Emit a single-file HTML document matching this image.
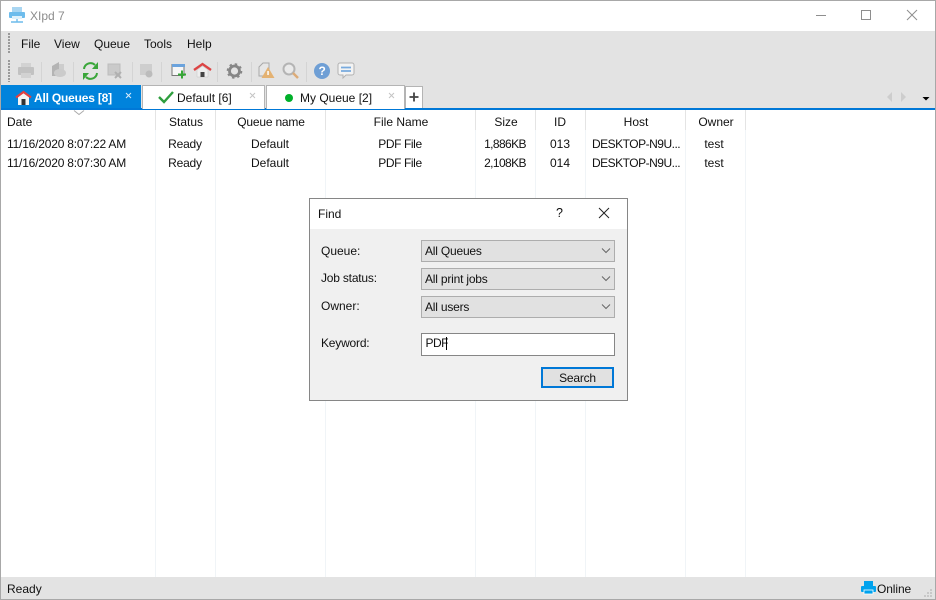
<!DOCTYPE html>
<html><head><meta charset="utf-8"><style>
html,body{margin:0;padding:0;background:#fff}
#w{position:relative;width:936px;height:600px;overflow:hidden;background:#fff;font:12px "Liberation Sans",sans-serif;color:#111}
#w div,#w span,#w svg{position:absolute}
.t{white-space:nowrap;line-height:14px}
.c{text-align:center}
.d{letter-spacing:-.2px}
.n{letter-spacing:-.5px}
.l{width:1px;top:110px;height:467px;background:#f0f4f7}
.h{width:1px;top:110px;height:20px;background:#e4e4e4}
.b{top:240px;left:421px;width:192px;height:20px;border:1px solid #adadad;background:#e1e1e1}
.sep{width:1px;height:20px;top:62px;background:#d4d4d4}
</style></head><body><div id="w">
<div style="left:0;top:0;width:936px;height:1px;background:#a8a8a8"></div>
<div style="left:0;top:31px;width:936px;height:54px;background:#e3e3e3"></div>
<div style="left:0;top:85px;width:936px;height:23px;background:#e3e3e3"></div>
<div style="left:0;top:108px;width:936px;height:2px;background:#0078d7"></div>
<div style="left:0;top:577px;width:936px;height:22px;background:#e3e3e3"></div>
<div style="left:0;top:0;width:1px;height:600px;background:#a8a8a8"></div>
<div style="left:935px;top:0;width:1px;height:600px;background:#a8a8a8"></div>
<div style="left:0;top:599px;width:936px;height:1px;background:#a8a8a8"></div>

<!-- title -->
<svg style="left:8px;top:6px;filter:blur(.3px)" width="18" height="18" viewBox="0 0 18 18"><rect x="4" y="1" width="10" height="6" fill="#a9d6f2"/><rect x="1" y="6" width="16" height="6" rx="1" fill="#6dbcec"/><rect x="4" y="10" width="10" height="3" fill="#dff1fb"/><path d="M9 13v3M3 16h12" stroke="#6dbcec" stroke-width="1.400"/></svg>
<span class="t" style="left:30px;top:9px;color:#8c8c8c;font-size:12px">XIpd 7</span>
<svg style="left:810px;top:5px" width="120" height="20" viewBox="0 0 120 20" fill="none" stroke="#8e8e8e" stroke-width="1"><path d="M6 10.500h10"/><rect x="51.500" y="5.500" width="9" height="9"/><path d="M97 5l10 10M107 5l-10 10"/></svg>

<!-- grips -->
<div style="left:8px;top:33px;width:2px;height:20px;background:repeating-linear-gradient(#9a9a9a 0 2px,transparent 2px 3px)"></div>
<div style="left:8px;top:60px;width:2px;height:22px;background:repeating-linear-gradient(#9a9a9a 0 2px,transparent 2px 3px)"></div>

<!-- menu -->
<span class="t" style="left:21px;top:37px">File</span>
<span class="t" style="left:54px;top:37px">View</span>
<span class="t" style="left:94px;top:37px">Queue</span>
<span class="t" style="left:144px;top:37px">Tools</span>
<span class="t" style="left:187px;top:37px">Help</span>

<!-- toolbar -->
<svg style="left:0;top:55px;filter:blur(.35px)" width="370" height="30" viewBox="0 0 370 30">
<rect x="21" y="8" width="10" height="5" fill="#d2d2d2"/><rect x="18" y="12" width="16" height="8" rx="1" fill="#c2c2c2"/><rect x="21" y="18" width="10" height="5" fill="#d2d2d2"/>
<path d="M52 11l7-4v14h-7z" fill="#b4b4b4"/><path d="M59 9h5v6h-5z" fill="#cdcdcd"/><ellipse cx="60" cy="18" rx="6" ry="4" fill="#cbcbcb"/>
<g fill="none" stroke="#3aa63a" stroke-width="2"><path d="M84 14a6.500 6.500 0 0 1 11-4"/><path d="M97 18a6.500 6.500 0 0 1-11 4"/></g><path d="M98 7v7h-6zM83 25v-7h6z" fill="#3aa63a"/>
<rect x="108" y="9" width="12" height="11" fill="#cacaca" stroke="#bcbcbc"/><path d="M115 17l6 6M121 17l-6 6" stroke="#b0b0b0" stroke-width="2"/>
<rect x="140" y="9" width="12" height="11" fill="#cecece"/><circle cx="149" cy="19" r="3.500" fill="#bcbcbc"/>
<rect x="172" y="9.500" width="12" height="11" fill="#f6f6f6" stroke="#777"/><rect x="172" y="9" width="13" height="3" fill="#6ba3dd"/><path d="M178 19.500h8M182 15.500v8" stroke="#35a835" stroke-width="2"/>
<path d="M194 15l8.500-6 8.500 6" fill="none" stroke="#dc4444" stroke-width="2.300"/><path d="M197 15l5.500-4 5.500 4v7h-11z" fill="#eee" stroke="#c4c4c4" stroke-width=".5"/><rect x="200.500" y="17" width="4" height="5" fill="#444"/>
<circle cx="234.500" cy="16" r="5" fill="none" stroke="#868686" stroke-width="2.800"/><circle cx="234.500" cy="16" r="7" fill="none" stroke="#868686" stroke-width="1.600" stroke-dasharray="2.500 3"/>
<path d="M259 21v-9l4-4h6v13z" fill="#e6e6e6" stroke="#a8a8a8"/><path d="M268 12l6.500 11h-13z" fill="#e4b272"/><rect x="267.300" y="16" width="1.500" height="4" fill="#fff"/>
<circle cx="289" cy="14" r="5.500" fill="#eaeaea" stroke="#b4b4b4" stroke-width="2"/><path d="M293 18l5 5" stroke="#dcab78" stroke-width="2.500"/>
<circle cx="322" cy="16" r="8" fill="#6f9fd5"/>
<path d="M340 8h12a2 2 0 0 1 2 2v8a2 2 0 0 1-2 2h-6l-3 3v-3h-3a2 2 0 0 1-2-2v-8a2 2 0 0 1 2-2z" fill="#f3f3f3" stroke="#b2b2b2"/><path d="M341 12.500h10M341 16h10" stroke="#78aade" stroke-width="1.800"/>
</svg>
<span class="t" style="left:318.500px;top:64px;color:#fff;font-weight:bold;font-size:12px">?</span>
<div class="sep" style="left:41px"></div><div class="sep" style="left:73px"></div><div class="sep" style="left:132px"></div><div class="sep" style="left:161px"></div><div class="sep" style="left:217px"></div><div class="sep" style="left:251px"></div><div class="sep" style="left:306px"></div>

<!-- tabs -->
<div style="left:1px;top:85px;width:140px;height:23px;background:#0083dc"></div>
<svg style="left:15px;top:90px" width="17" height="15" viewBox="0 0 17 15"><path d="M3 7l5.500-5L14 7v8H3z" fill="#f4f4f4"/><path d="M1 7.500l7.500-5.500L16 7.500" fill="none" stroke="#e04040" stroke-width="2.200"/><rect x="6.500" y="9" width="4" height="6" fill="#333"/></svg>
<span class="t" style="left:34px;top:91px;color:#fff;font-weight:bold;letter-spacing:-.2px">All Queues [8]</span>
<svg style="left:125px;top:92px" width="8" height="8"><path d="M1 1l5 5M6 1l-5 5" stroke="#d8ecfa" fill="none"/></svg>

<div style="left:142px;top:85px;width:121px;height:23px;background:#fff;border:1px solid #b4b4b4;border-bottom:0"></div>
<svg style="left:157px;top:90px" width="18" height="14" viewBox="0 0 18 14"><path d="M2 7l5 5L16 2" fill="none" stroke="#2e9e3e" stroke-width="2.400"/></svg>
<span class="t" style="left:177px;top:91px">Default [6]</span>
<svg style="left:249px;top:92px" width="8" height="8"><path d="M1 1l5 5M6 1l-5 5" stroke="#c4c4c4" fill="none"/></svg>

<div style="left:266px;top:85px;width:137px;height:23px;background:#fff;border:1px solid #b4b4b4;border-bottom:0"></div>
<div style="left:285px;top:94px;width:8px;height:8px;border-radius:50%;background:#00b02a"></div>
<span class="t" style="left:300px;top:91px">My Queue [2]</span>
<svg style="left:388px;top:92px" width="8" height="8"><path d="M1 1l5 5M6 1l-5 5" stroke="#c4c4c4" fill="none"/></svg>

<div style="left:405px;top:86px;width:16px;height:21px;background:#fff;border:1px solid #b4b4b4;border-bottom:0"></div>
<svg style="left:409px;top:92px" width="10" height="10"><path d="M5 0.500v9M0.500 5h9" stroke="#444" stroke-width="1.800"/></svg>

<svg style="left:884px;top:90px" width="50" height="14"><path d="M8 2L3 7l5 5z" fill="#cdcdcd"/><path d="M17 2l5 5-5 5z" fill="#cdcdcd"/><path d="M38.500 7h7l-3.500 3.500z" fill="#000"/></svg>

<!-- list -->
<div class="l" style="left:155px"></div><div class="l" style="left:215px"></div><div class="l" style="left:325px"></div><div class="l" style="left:475px"></div><div class="l" style="left:535px"></div><div class="l" style="left:585px"></div><div class="l" style="left:685px"></div><div class="l" style="left:745px"></div>
<div class="h" style="left:155px"></div><div class="h" style="left:215px"></div><div class="h" style="left:325px"></div><div class="h" style="left:475px"></div><div class="h" style="left:535px"></div><div class="h" style="left:585px"></div><div class="h" style="left:685px"></div><div class="h" style="left:745px"></div>
<svg style="left:73px;top:110px" width="12" height="6"><path d="M1 0.500l5 4 5-4" fill="none" stroke="#aaa"/></svg>

<span class="t" style="left:7px;top:115px">Date</span>
<span class="t c" style="left:156px;width:60px;top:115px">Status</span>
<span class="t c d" style="left:216px;width:110px;top:115px">Queue name</span>
<span class="t c" style="left:326px;width:150px;top:115px">File Name</span>
<span class="t c" style="left:476px;width:60px;top:115px">Size</span>
<span class="t c" style="left:535px;width:50px;top:115px">ID</span>
<span class="t c" style="left:586px;width:100px;top:115px">Host</span>
<span class="t c" style="left:686px;width:60px;top:115px">Owner</span>

<span class="t d" style="left:7px;top:137px">11/16/2020 8:07:22 AM</span>
<span class="t c d" style="left:155px;width:60px;top:137px">Ready</span>
<span class="t c" style="left:215px;width:110px;top:137px">Default</span>
<span class="t c" style="left:325px;width:150px;top:137px;letter-spacing:-.4px">PDF File</span>
<span class="t c" style="left:475px;width:60px;top:137px;letter-spacing:-.6px">1,886KB</span>
<span class="t c" style="left:535px;width:50px;top:137px">013</span>
<span class="t n" style="left:592px;top:137px">DESKTOP-N9U...</span>
<span class="t c" style="left:684px;width:60px;top:137px">test</span>

<span class="t d" style="left:7px;top:156px">11/16/2020 8:07:30 AM</span>
<span class="t c d" style="left:155px;width:60px;top:156px">Ready</span>
<span class="t c" style="left:215px;width:110px;top:156px">Default</span>
<span class="t c" style="left:325px;width:150px;top:156px;letter-spacing:-.4px">PDF File</span>
<span class="t c" style="left:475px;width:60px;top:156px;letter-spacing:-.6px">2,108KB</span>
<span class="t c" style="left:535px;width:50px;top:156px">014</span>
<span class="t n" style="left:592px;top:156px">DESKTOP-N9U...</span>
<span class="t c" style="left:684px;width:60px;top:156px">test</span>

<!-- status -->
<span class="t" style="left:7px;top:582px">Ready</span>
<svg style="left:861px;top:581px" width="15" height="15" viewBox="0 0 15 15"><rect x="3" y="0" width="9" height="5" fill="#00a2ed"/><rect x="0" y="5" width="15" height="6" rx="1" fill="#00a2ed"/><rect x="3" y="9" width="9" height="4" fill="#00a2ed" stroke="#fff" stroke-width=".8"/></svg>
<span class="t" style="left:877px;top:582px;letter-spacing:-.1px">Online</span>
<svg style="left:924px;top:589px" width="10" height="10" fill="#c8c8c8"><rect x="6" y="0" width="2" height="2"/><rect x="3" y="3" width="2" height="2"/><rect x="6" y="3" width="2" height="2"/><rect x="0" y="6" width="2" height="2"/><rect x="3" y="6" width="2" height="2"/><rect x="6" y="6" width="2" height="2"/></svg>

<!-- dialog -->
<div style="left:309px;top:198px;width:317px;height:201px;border:1px solid #868686;background:#f0f0f0"></div>
<div style="left:310px;top:199px;width:317px;height:30px;background:#fff"></div>
<span class="t" style="left:318px;top:207px">Find</span>
<span class="t" style="left:556px;top:206px;font-size:12.500px">?</span>
<svg style="left:598px;top:207px" width="12" height="12"><path d="M1 1l10 10M11 1L1 11" stroke="#222" fill="none"/></svg>

<span class="t" style="left:321px;top:244px">Queue:</span>
<span class="t d" style="left:321px;top:271px">Job status:</span>
<span class="t" style="left:321px;top:299px">Owner:</span>
<span class="t d" style="left:321px;top:336px">Keyword:</span>

<div class="b" style="top:240px"></div><div class="b" style="top:268px"></div><div class="b" style="top:296px"></div>
<span class="t d" style="left:425px;top:244px">All Queues</span>
<span class="t d" style="left:425px;top:272px">All print jobs</span>
<span class="t d" style="left:425px;top:300px">All users</span>
<svg style="left:601px;top:248px" width="10" height="6"><path d="M1 0.500l4 4 4-4" fill="none" stroke="#666"/></svg>
<svg style="left:601px;top:276px" width="10" height="6"><path d="M1 0.500l4 4 4-4" fill="none" stroke="#666"/></svg>
<svg style="left:601px;top:304px" width="10" height="6"><path d="M1 0.500l4 4 4-4" fill="none" stroke="#666"/></svg>

<div style="left:421px;top:333px;width:192px;height:21px;background:#fff;border:1px solid #868686"></div>
<span class="t" style="left:425.500px;top:336px;letter-spacing:-.5px">PDF</span>
<div style="left:446px;top:337px;width:1px;height:13px;background:#000"></div>

<div style="left:541px;top:367px;width:69px;height:17px;background:#e1e1e1;border:2px solid #0078d7"></div>
<span class="t c d" style="left:541px;width:73px;top:371px">Search</span>
</div></body></html>
